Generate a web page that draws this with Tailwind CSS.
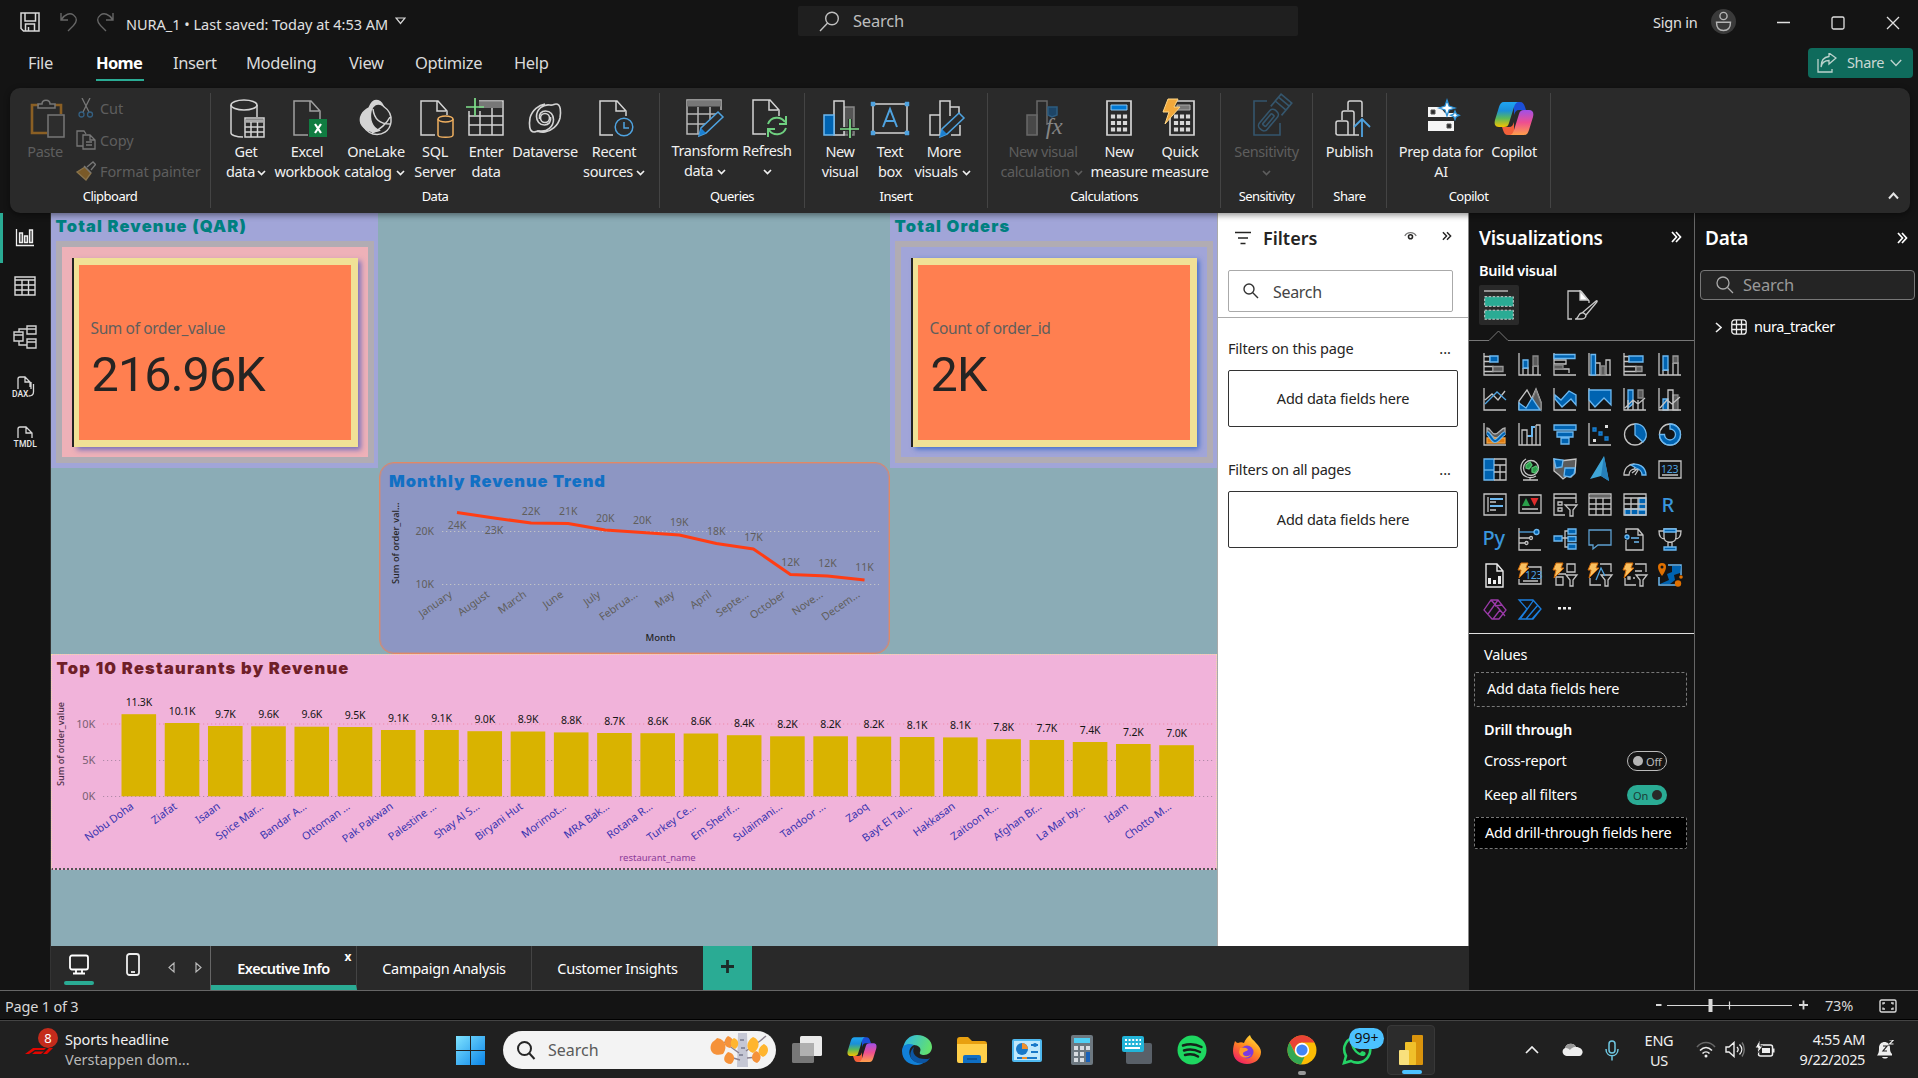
<!DOCTYPE html>
<html lang="en">
<head>
<meta charset="utf-8">
<title>NURA_1</title>
<script src="https://cdn.jsdelivr.net/npm/@tailwindcss/browser@4"></script>
</head>
<body class="w-[1918px] h-[1078px] overflow-hidden bg-[#141414] text-white font-['Noto_Sans',sans-serif] text-[14.5px] tracking-[-0.014em] whitespace-nowrap flex flex-col">

<!-- title bar -->
<header class="h-[43px] shrink-0 flex items-start text-[#e0e0e0]">
  <svg class="ml-5 mt-3 w-5 h-5 shrink-0" viewBox="0 0 20 20" fill="none" stroke="#d8d8d8" stroke-width="1.5"><path d="M1 1h18v18H3.500l-2.500-2.500zM5 1v8h10.500V1M5.500 19v-7h9v7M8.500 19v-4"/></svg>
  <svg class="ml-5 mt-3 w-[18px] h-5 shrink-0" viewBox="0 0 18 20" fill="none" stroke="#666" stroke-width="1.400"><path d="M1 1v7h7M1.500 7.500C5 2 10 .5 13.500 3c4 3 3.500 7 0 10.500L8 19"/></svg>
  <svg class="ml-[18px] mt-3 w-[18px] h-5 shrink-0" viewBox="0 0 18 20" fill="none" stroke="#666" stroke-width="1.400"><path d="M17 1v7h-7M16.500 7.500C13 2 8 .5 4.500 3c-4 3-3.500 7 0 10.500L10 19"/></svg>
  <div class="ml-3 mt-[14px] w-[262px] leading-5 tracking-[-0.001em]">NURA_1 • Last saved: Today at 4:53 AM</div>
  <svg class="ml-[7px] mt-[17px] w-[11px] h-2 shrink-0" viewBox="0 0 11 8" fill="none" stroke="#d8d8d8" stroke-width="1.200"><path d="M1 1h9L5.500 6.500z"/></svg>
  <div class="ml-[392px] mt-1.5 w-[500px] h-[30px] bg-[#1f1f1f] rounded-xs flex items-center pl-[21px] text-[16.5px] text-[#bdbdbd]">
    <svg class="w-[21px] h-[21px]" viewBox="0 0 21 21" fill="none" stroke="#c0c0c0" stroke-width="1.400"><circle cx="13" cy="7.500" r="6.300"/><path d="M8.600 12L1 20"/></svg>
    <span class="ml-[13px]">Search</span>
  </div>
  <div class="ml-[355px] mt-3 w-[48px] leading-5">Sign in</div>
  <svg class="ml-[10px] mt-[9px] w-[25px] h-[25px] shrink-0" viewBox="0 0 25 25" fill="none" stroke="#b5b5b5" stroke-width="1.400"><circle cx="12.500" cy="12.500" r="12.500" fill="#3a3a3a" stroke="none"/><circle cx="12.500" cy="7" r="3.600"/><path d="M5.500 13.200h14c0 5-2.500 8.300-7 8.300s-7-3.300-7-8.300z"/></svg>
  <svg class="ml-10 mt-3 w-[126px] h-5 shrink-0" viewBox="0 0 126 20" fill="none" stroke="#e0e0e0" stroke-width="1.300"><path d="M1 10.500h13M111 5l12 12M123 5l-12 12"/><rect x="56" y="5" width="12" height="12" rx="1.500"/></svg>
</header>

<!-- menu tabs -->
<nav class="h-[45px] shrink-0 flex items-start text-[16.500px] text-[#dadada] tracking-[-0.022em]">
  <div class="ml-7 mt-2 w-[68px] leading-6">File</div>
  <div class="mt-2 w-[48px] h-[30px] leading-6 font-bold text-white border-b-2 border-[#2aab94] tracking-[-0.04em]">Home</div>
  <div class="ml-[29px] mt-2 w-[73px] leading-6">Insert</div>
  <div class="mt-2 w-[103px] leading-6">Modeling</div>
  <div class="mt-2 w-[66px] leading-6">View</div>
  <div class="mt-2 w-[99px] leading-6">Optimize</div>
  <div class="mt-2 leading-6">Help</div>
  <div class="ml-auto mr-[5px] mt-[5px] w-[105px] h-[30px] rounded bg-[#0f6b5c] flex items-center pl-[9px] text-[14.5px] text-[#c8d8d4]">
    <svg class="w-5 h-5" viewBox="0 0 20 20" fill="none" stroke="#bcd3cd" stroke-width="1.300"><path d="M1 6v13h14v-3"/><path d="M4 14c1-4.500 4-6.500 8-6.500V11l7-6-7-5v3.500C7 4 4 8 4 14z"/></svg>
    <span class="ml-[10px]">Share</span>
    <svg class="ml-[6px] w-3 h-2" viewBox="0 0 12 8" fill="none" stroke="#bcd3cd" stroke-width="1.400"><path d="M.8 1L6 6.500 11.200 1"/></svg>
  </div>
</nav>

<svg class="hidden"><symbol id="chev" viewBox="0 0 9 6"><path d="M1 1l3.500 3.500L8 1" fill="none" stroke="currentColor" stroke-width="1.700"/></symbol></svg>

<!-- ribbon -->
<section class="relative z-10 mx-[10px] w-[1900px] h-[125px] shrink-0 rounded-[10px] bg-[#2a2a2a] shadow-[0_2px_6px_rgba(0,0,0,0.45)] flex py-[5px] text-[#f0f0f0] leading-5 tracking-[-0.026em]">
  <div class="w-[201px] border-r border-[#444] flex flex-col text-[#5e5e5e]">
    <div class="h-[93px] flex pl-[18px]">
      <div class="w-[34px] flex flex-col items-center">
        <svg class="ml-[5px] mt-[6px] w-9 h-[39px] shrink-0" viewBox="0 0 36 39" fill="none"><path d="M9 6H2v28h15M25 6h6v9" stroke="#8a5f24" stroke-width="2.600"/><path d="M8 9V5h4c0-5 8-5 8 0h5v4z" stroke="#777" stroke-width="1.500"/><rect x="18" y="16" width="16" height="22" stroke="#777" stroke-width="1.500" fill="#2d2d2d"/></svg>
        <span class="mt-[3px]">Paste</span>
      </div>
      <div class="ml-[14px] flex flex-col tracking-[-0.008em]">
        <div class="h-[30px] flex items-center"><svg class="w-5 h-5" viewBox="0 0 20 20" fill="none" stroke="#777" stroke-width="1.300"><path d="M6 0l7 14M14 0L7 14"/><g stroke="#345f80"><circle cx="5.500" cy="16.500" r="2.500"/><circle cx="14" cy="16.500" r="2.500"/></g></svg><span class="ml-[4px]">Cut</span></div>
        <div class="h-[35px] flex items-center"><svg class="w-5 h-5" viewBox="0 0 20 20" fill="none" stroke="#777" stroke-width="1.300"><path d="M7 16H1V1h7l2 3M7 5h7l5 5v9H7zM14 5v5h5M10 12h6M10 15h6"/></svg><span class="ml-[4px]">Copy</span></div>
        <div class="h-[30px] flex items-center"><svg class="w-5 h-5" viewBox="0 0 20 20" fill="none" stroke="#777" stroke-width="1.300"><path d="M1 11l8-5 6 6-5 7z" fill="#7a5a28" stroke="#8a744c"/><path d="M8 5l7 7M11 6l6-5 2.500 2.500L15 9"/></svg><span class="ml-[4px]">Format painter</span></div>
      </div>
    </div>
    <div class="text-center text-white text-[13px] tracking-[-0.04em]">Clipboard</div>
  </div>

  <div class="w-[449px] border-r border-[#444] flex flex-col">
    <div class="h-[93px] flex pl-[7px] [&>div]:flex [&>div]:flex-col [&>div]:items-center [&>div]:pt-[4px]">
      <div class="w-[56px]"><svg class="w-10 h-11 shrink-0 ml-1" viewBox="0 0 40 44" fill="none" stroke="#d4d4d4" stroke-width="1.500"><ellipse cx="16" cy="8" rx="13" ry="5"/><path d="M3 8v28c0 2 5 4 12 4M29 8v12"/><rect x="17" y="21" width="19" height="19"/><path d="M17 24h19" stroke-width="3.500" stroke="#aaa"/><path d="M17 30h19M17 35h19M23 25v15M29.500 25v15"/></svg><span>Get</span><span>data<svg class="inline ml-[2px] w-[9px] h-[6px]"><use href="#chev"/></svg></span></div>
      <div class="w-[66px]"><svg class="w-10 h-11 shrink-0" viewBox="0 0 40 44" fill="none" stroke="#a0a0a0" stroke-width="1.500"><path d="M21 38H7V4h17l9 10v8M23 4v10h9"/><rect x="22" y="22" width="18" height="18" fill="#107c41" stroke="none"/><path d="M28 27l6 9M34 27l-6 9" stroke="#fff" stroke-width="2.200"/></svg><span>Excel</span><span>workbook</span></div>
      <div class="w-[72px]"><svg class="w-10 h-11 shrink-0" viewBox="0 0 40 44" fill="none" stroke="#d4d4d4" stroke-width="1.500"><path d="M13 11C15 6 17 3.500 20 3.500s5.500 2 7 5c-6-3-10-1-12 5-2 9 1 17 8 20-7 3-15-1-18-7-2-6 1-12 8-15.500z" fill="#d4d4d4"/><path d="M27 9c6 4 9 10 8 16-1 9-9 14-18 12-6-2-10-7-11-13M17 12c1 9 6 15 17 15M16 36c8-3 15-10 18-16"/></svg><span>OneLake</span><span class="-ml-[3px]">catalog<svg class="inline ml-[4px] w-[9px] h-[6px]"><use href="#chev"/></svg></span></div>
      <div class="w-[46px]"><svg class="w-10 h-11 shrink-0 ml-1" viewBox="0 0 40 44" fill="none" stroke="#d4d4d4" stroke-width="1.500"><path d="M18 38H4V4h17l9 10v4M20 4v10h9"/><g stroke="#f0b060" fill="#2a2a2a"><path d="M21 22v16c0 3 15 3 15 0V22"/><ellipse cx="28.500" cy="22" rx="7.500" ry="3"/></g></svg><span>SQL</span><span>Server</span></div>
      <div class="w-[56px]"><svg class="w-10 h-11 shrink-0 overflow-visible" viewBox="0 0 40 44" fill="none" stroke="#d4d4d4" stroke-width="1.500"><path d="M3 14v24h34V4H13M3 19h34M3 28h34M14 14v24M26 10v28"/><path d="M13 6.500h23M13 9h23" stroke="#777" stroke-width="4"/><path d="M0 10h18M9 1v18" stroke="#7fe08a" stroke-width="1.700"/></svg><span>Enter</span><span>data</span></div>
      <div class="w-[62px]"><svg class="w-10 h-11 shrink-0" viewBox="0 0 40 44" fill="none" stroke="#d4d4d4" stroke-width="1.600"><circle cx="20" cy="21" r="4.500"/><path d="M25.500 20c1 5-2 8-6 8-5 0-8-4-8-8.500C11.500 12 18 7 25 8c3 .5 4-1 6-1 5 0 5 8 4 14-2 8-9 13-15 14-3 .5-5 0-8-1M14.500 22c-1-5 2-8 6-8 5 0 8 4 8 8.500C28.500 30 22 35 15 34c-3-.5-4 1-6 1-5 0-5-8-4-14C7 13 14 8 20 7"/></svg><span>Dataverse</span></div>
      <div class="w-[76px]"><svg class="w-10 h-11 shrink-0 ml-1" viewBox="0 0 40 44" fill="none" stroke="#d4d4d4" stroke-width="1.500"><path d="M17 38H4V4h17l9 10v5M20 4v10h9"/><g stroke="#4fa3e0"><circle cx="28" cy="30" r="8.800"/><path d="M28 25v6h5"/></g></svg><span>Recent</span><span>sources<svg class="inline ml-[3px] w-[9px] h-[6px]"><use href="#chev"/></svg></span></div>
    </div>
    <div class="text-center text-white text-[13px] tracking-[-0.04em]">Data</div>
  </div>

  <div class="w-[145px] border-r border-[#444] flex flex-col">
    <div class="h-[93px] flex pl-[12px] [&>div]:flex [&>div]:flex-col [&>div]:items-center [&>div]:pt-[3px]">
      <div class="w-[66px]"><svg class="w-10 h-11 shrink-0" viewBox="0 0 40 44" fill="none" stroke="#b8b8b8" stroke-width="1.500"><path d="M36 14V4H2v34h12M2 18h32M2 28h20M13 11v27M25 11v13"/><path d="M2 7.500h34" stroke="#777" stroke-width="6"/><path d="M14 40l2-8 17-16 5 5-17 16z" stroke="#4fa3e0" fill="#2a2a2a"/><path d="M14 40l2-8 5 5z" fill="#1b7fd0" stroke="none"/></svg><span>Transform</span><span>data<svg class="inline ml-[4px] w-[9px] h-[6px]"><use href="#chev"/></svg></span></div>
      <div class="w-[58px]"><svg class="w-10 h-11 shrink-0 ml-1" viewBox="0 0 40 44" fill="none" stroke="#d4d4d4" stroke-width="1.500"><path d="M17 38H4V4h17l9 10v6M20 4v10h9"/><g stroke="#6fd080" stroke-width="2"><path d="M19 28c3-8 13-8 17-2M37 20v8h-7M37 32c-3 8-13 8-17 2M19 41v-8h7"/></g></svg><span>Refresh</span><span><svg class="inline w-[9px] h-[6px]"><use href="#chev"/></svg></span></div>
    </div>
    <div class="text-center text-white text-[13px] tracking-[-0.04em]">Queries</div>
  </div>

  <div class="w-[183px] border-r border-[#444] flex flex-col">
    <div class="h-[93px] flex pl-[10px] [&>div]:flex [&>div]:flex-col [&>div]:items-center [&>div]:pt-[4px]">
      <div class="w-[50px]"><svg class="w-10 h-11 shrink-0" viewBox="0 0 40 44" fill="none" stroke="#d4d4d4" stroke-width="1.500"><rect x="24" y="10" width="10" height="28" fill="#555" stroke="#888"/><rect x="14" y="4" width="10" height="34" fill="#2a2a2a"/><rect x="4" y="18" width="10" height="20" fill="#0063b1" stroke="#6cb8f0"/><path d="M20 32h19M30 22v19" stroke="#2a2a2a" stroke-width="4"/><path d="M20 32h19M30 22v19" stroke="#7fe08a" stroke-width="1.700"/></svg><span>New</span><span>visual</span></div>
      <div class="w-[50px]"><svg class="w-10 h-11 shrink-0" viewBox="0 0 40 44" fill="none" stroke="#d4d4d4" stroke-width="1.500"><path d="M3 7h34v29H3z"/><path d="M13 30l7-18 7 18M15.500 24h9" stroke="#4fa3e0" stroke-width="2"/><path d="M1 5h4v4H1zM35 5h4v4h-4zM1 34h4v4H1zM35 34h4v4h-4z" fill="#4fa3e0" stroke="#4fa3e0" stroke-width=".5"/></svg><span>Text</span><span>box</span></div>
      <div class="w-[58px]"><svg class="ml-1 w-10 h-11 shrink-0" viewBox="0 0 40 44" fill="none" stroke="#d4d4d4" stroke-width="1.500"><path d="M4 38V18h10v20zM14 18V4h10v15M24 10h9v6M25 38h9V28M14 38V28"/><path d="M14 40l2-8 17-16 5 5-17 16z" stroke="#4fa3e0" fill="#2a2a2a"/><path d="M14 40l2-8 5 5z" fill="#1b7fd0" stroke="none"/></svg><span>More</span><span class="-ml-[3px]">visuals<svg class="inline ml-[4px] w-[9px] h-[6px]"><use href="#chev"/></svg></span></div>
    </div>
    <div class="text-center text-white text-[13px] tracking-[-0.04em]">Insert</div>
  </div>

  <div class="w-[233px] border-r border-[#444] flex flex-col">
    <div class="h-[93px] flex pl-[9px] [&>div]:flex [&>div]:flex-col [&>div]:items-center [&>div]:pt-[4px]">
      <div class="w-[92px] text-[#5e5e5e]"><svg class="w-10 h-11 shrink-0" viewBox="0 0 40 44" fill="none" stroke="#686868" stroke-width="1.500"><path d="M4 38V18h10v20z" fill="#484848"/><path d="M14 38V4h10v24"/><path d="M25 10h9v8l-5 2-4-2z" fill="#1d4567" stroke="#2d5c80"/></svg><span class="absolute mt-[17px] ml-[22px] text-[24px] leading-6 italic font-['Liberation_Serif',serif] text-[#858585]">fx</span><span>New visual</span><span class="-ml-[3px]">calculation<svg class="inline ml-[4px] w-[9px] h-[6px]"><use href="#chev"/></svg></span></div>
      <div class="w-[60px]"><svg class="w-10 h-11 shrink-0" viewBox="0 0 40 44"><path d="M8 4h24v34H8z" fill="#2a2a2a" stroke="#d4d4d4" stroke-width="1.700"/><path d="M12 8h16v5H12z" fill="#0078d4" stroke="#8cc8f4"/><path d="M14 17.500v17M20 17.500v17M26 17.500v17" stroke="#d8d8d8" stroke-width="4.200" stroke-dasharray="4 2.500"/></svg><span>New</span><span>measure</span></div>
      <div class="w-[62px]"><svg class="w-10 h-11 shrink-0" viewBox="0 0 40 44"><path d="M10 4h24v34H10z" fill="#2a2a2a" stroke="#d4d4d4" stroke-width="1.700"/><path d="M17 8h13v5H17z" fill="#777" stroke="#aaa"/><path d="M16 17.500v17M22 17.500v17M28 17.500v17" stroke="#d8d8d8" stroke-width="4.200" stroke-dasharray="4 2.500"/><path d="M8 2h10l-4 8h6L5 27l4-12H3z" fill="#f2a93b" stroke="#ffd685"/></svg><span>Quick</span><span>measure</span></div>
    </div>
    <div class="text-center text-white text-[13px] tracking-[-0.04em]">Calculations</div>
  </div>

  <div class="w-[92px] border-r border-[#444] flex flex-col">
    <div class="h-[93px] flex flex-col items-center pt-[4px] text-[#5e5e5e]">
      <svg class="ml-1 w-10 h-11 shrink-0 overflow-visible" viewBox="0 0 40 44" fill="none" stroke="#35566d" stroke-width="1.600"><path d="M18 4H5v34h26V26"/><g transform="rotate(40 22 20)"><rect x="17" y="12" width="10" height="24" rx="4"/><rect x="20" y="17" width="4" height="14" rx="1"/><path d="M15 12V5h14v7M15 0h14M15-4h14v9H15z"/></g></svg>
      <span>Sensitivity</span><span><svg class="inline w-[9px] h-[6px]"><use href="#chev"/></svg></span>
    </div>
    <div class="text-center text-white text-[13px] tracking-[-0.04em]">Sensitivity</div>
  </div>

  <div class="w-[74px] border-r border-[#444] flex flex-col">
    <div class="h-[93px] flex flex-col items-center pt-[4px]">
      <svg class="ml-1 w-10 h-11 shrink-0" viewBox="0 0 40 44" fill="none" stroke="#d4d4d4" stroke-width="1.500"><path d="M4 37V26q0-2 2-2h8q2 0 2 2v12H6q-2 0-2-2M10 23v-7q0-2 2-2h8q2 0 2 2v22h-8M16 13V6q0-2 2-2h10q2 0 2 2v14M22 38h5"/><path d="M30 40V22M22 30l8-8 8 8" stroke="#4fa3e0" stroke-width="1.800"/></svg>
      <span>Publish</span>
    </div>
    <div class="text-center text-white text-[13px] tracking-[-0.04em]">Share</div>
  </div>

  <div class="w-[164px] border-r border-[#444] flex flex-col">
    <div class="h-[93px] flex pl-[14px] [&>div]:flex [&>div]:flex-col [&>div]:items-center [&>div]:pt-[4px]">
      <div class="w-[80px]"><svg class="w-10 h-11 shrink-0" viewBox="0 0 40 44"><path d="M7 10h12l5 6h9v4H7zM7 24h26v10H7z" fill="#f5f5f5"/><path d="M10 13h4v4h-4zM26 27h4v4h-4z" fill="#2a2a2a" stroke="#555"/><path d="M26 3l2 6 6 2-6 2-2 6-2-6-6-2 6-2zM34 14l1.300 3 3 1.300-3 1.300-1.300 3-1.300-3-3-1.300 3-1.300z" fill="#fff" stroke="#2a8fd4" stroke-width="1.300"/></svg><span>Prep data for</span><span>AI</span></div>
      <div class="w-[66px]"><svg class="w-10 h-11 shrink-0" viewBox="0 0 40 44"><defs>
        <linearGradient id="cpA" x1="0" y1="0" x2="0" y2="1"><stop offset="0" stop-color="#1fa5f2"/><stop offset=".35" stop-color="#1b8fd8"/><stop offset=".65" stop-color="#5ab85a"/><stop offset="1" stop-color="#f5c400"/></linearGradient>
        <linearGradient id="cpB" x1="0" y1="0" x2="0" y2="1"><stop offset="0" stop-color="#a050e8"/><stop offset=".5" stop-color="#ee4f90"/><stop offset="1" stop-color="#ffa04a"/></linearGradient></defs>
        <g id="copilot"><path d="M20 5h6c3 0 4 2 5 5l1 3h-7c-3 0-4 2-5 5z" fill="#1c4fd8"/><path d="M20 38h-6c-3 0-4-2-5-5l-1-3h7c3 0 4-2 5-5z" fill="#f2603a"/>
        <path d="M10 5h15c-3 0-4 2-5 5l-5 16c-1 3-2 4-5 4H5c-4 0-5-3-4-7L5 10c1-3 2-5 5-5z" fill="url(#cpA)"/><path d="M30 38H15c3 0 4-2 5-5l5-16c1-3 2-4 5-4h5c4 0 5 3 4 7l-4 13c-1 3-2 5-5 5z" fill="url(#cpB)"/></g></svg><span>Copilot</span></div>
    </div>
    <div class="text-center text-white text-[13px] tracking-[-0.04em]">Copilot</div>
  </div>
  <svg class="ml-auto mr-[11px] mt-[99px] w-[11px] h-2" viewBox="0 0 11 8" fill="none" stroke="#e4e4e4" stroke-width="2"><path d="M1 6.500l4.500-5 4.500 5"/></svg>
</section>

<!-- workspace -->
<main class="h-[777px] shrink-0 flex">
  <aside class="w-[51px] shrink-0 border-r border-[#333] flex flex-col items-center relative pt-[12px] gap-[26px]">
    <div class="absolute left-0 top-0 w-[3px] h-[50px] bg-[#2aab94]"></div>
    <svg class="w-6 h-6" viewBox="0 0 24 24" fill="none" stroke="#f0f0f0" stroke-width="1.300"><path d="M3.500 4v16.500H21"/><path d="M6.500 8h3v9.500h-3zM11.500 11h3v6.500h-3zM16.500 5h3v12.500h-3z" fill="#666"/></svg>
    <svg class="w-6 h-6" viewBox="0 0 24 24" fill="none" stroke="#d8d8d8" stroke-width="1.400"><path d="M2 2h20v18H2zM2 5h20M2 10h20M2 15h20M9 5v15M15.500 5v15"/></svg>
    <svg class="w-6 h-6" viewBox="0 0 24 24" fill="none" stroke="#d0d0d0" stroke-width="1.400"><path d="M1 7h9v9H1zM14 1h9v8h-9zM14 14h9v9h-9zM1 10h9M14 4h9M14 17h9M6 7V4h8M6 16v4h8"/></svg>
    <svg class="w-[26px] h-6 overflow-visible" viewBox="0 0 26 24" fill="none" stroke="#d8d8d8" stroke-width="1.300"><path d="M6 14V4q0-2 2-2h5l5 5v5M13 2v5h5M19 14V7M21.500 9v8q0 4-5 4"/><text x="0" y="21.500" font-size="8.500" fill="#e8e8e8" stroke="none" letter-spacing="0" font-family="Roboto" font-weight="500">DAX</text></svg>
    <svg class="w-[26px] h-6 overflow-visible" viewBox="0 0 26 24" fill="none" stroke="#d8d8d8" stroke-width="1.300"><path d="M6 13V4q0-2 2-2h6l6 6v5M14 2v6h6"/><text x="1.500" y="21.500" font-size="8.500" fill="#e8e8e8" stroke="none" letter-spacing=".2" font-family="Roboto" font-weight="500">TMDL</text></svg>
  </aside>

  <div class="w-[1418px] shrink-0 flex flex-col">
    <div class="h-[733px] flex">
      <!-- report canvas: freely placed visuals -->
      <div class="relative w-[1166px] shrink-0 bg-[#8bacb6] overflow-hidden">
        <section class="absolute left-0 top-0 w-[327px] h-[255px] bg-[#a1a5d8] flex flex-col px-[4.500px]">
          <h2 class="h-[28px] leading-[27px] text-[16.500px] text-[#008080] font-['Inter',sans-serif] font-black tracking-[0.07em]">Total Revenue (QAR)</h2>
          <div class="h-[222px] border-[6px] border-[#b1acb3] bg-[#eeb1b8] pt-[11px] pl-[12px]">
            <div class="w-[284px] h-[189px] bg-[#ff7f50] border-[7px] border-l-[5px] border-[#f0e196] shadow-[-2px_0_0_#222,3px_3px_5px_rgba(60,80,190,0.65)] pt-[51px] pl-[12px]">
              <div class="leading-6 text-[15.500px] text-[#605e5c] tracking-[-0.024em]">Sum of order_value</div>
              <div class="mt-[7px] pl-[1px] leading-[56px] text-[48.500px] text-[#252423] font-['Roboto',sans-serif] tracking-[-0.018em]">216.96K</div>
            </div>
          </div>
        </section>
        <section class="absolute left-[839px] top-0 w-[327px] h-[255px] bg-[#a1a5d8] flex flex-col px-[4.500px]">
          <h2 class="h-[28px] leading-[27px] text-[16.500px] text-[#008080] font-['Inter',sans-serif] font-black tracking-[0.07em]">Total Orders</h2>
          <div class="h-[222px] border-[6px] border-[#b1acb3] bg-[#a1a5d8] pt-[11px] pl-[12px]">
            <div class="w-[284px] h-[189px] bg-[#ff7f50] border-[7px] border-l-[5px] border-[#f0e196] shadow-[-2px_0_0_#222,2px_2px_5px_rgba(30,90,200,0.75)] pt-[51px] pl-[12px]">
              <div class="leading-6 text-[15.500px] text-[#605e5c] tracking-[-0.024em]">Count of order_id</div>
              <div class="mt-[7px] pl-[1px] leading-[56px] text-[48.500px] text-[#252423] font-['Roboto',sans-serif] tracking-[-0.018em]">2K</div>
            </div>
          </div>
        </section>

        <section class="absolute left-[328px] top-[249px] w-[511px] h-[192px] rounded-[15px] bg-[#8d96c3] border border-[#e08866] outline outline-[#e08866]/40 -outline-offset-2">
          <svg id="trend" class="w-full h-full overflow-visible" viewBox="380 463 509 190" letter-spacing="0">
            <text x="389" y="487" font-family="Inter" font-weight="900" font-size="16.500" letter-spacing=".95" fill="#1270c4">Monthly Revenue Trend</text>
            <path d="M442 531.500h437M442 584.500h437" stroke="#c8c8c8" stroke-opacity=".9" stroke-dasharray="1.300 2.700" fill="none"/>
            <g font-size="10.500" fill="#605e5c" text-anchor="end"><text x="434" y="535">20K</text><text x="434" y="588">10K</text></g>
            <text transform="translate(398.500 584) rotate(-90)" font-size="9.200" font-weight="500" fill="#252423">Sum of order_val...</text>
            <text x="660.500" y="641" text-anchor="middle" font-size="9.500" font-weight="500" fill="#252423">Month</text>
          </svg>
        </section>

        <section class="absolute left-0 top-[441px] w-[1166px] h-[216px] bg-[#f1b3da] border border-[#f0dca8] border-b-2 border-b-[#555] border-dotted">
          <svg id="bars" class="w-full h-full overflow-visible" viewBox="52 655 1164 213" letter-spacing="0">
            <text x="56.500" y="673.500" font-family="Inter" font-weight="900" font-size="16.500" letter-spacing="1.220" fill="#6f1f28">Top 10 Restaurants by Revenue</text>
            <path d="M103 724h1110" stroke="#ee7f9c" stroke-opacity=".8" stroke-dasharray="1.200 2.800" fill="none"/>
            <path d="M103 760.500h1110M103 796.500h1110" stroke="#b08aa8" stroke-dasharray="1.200 2.800" fill="none"/>
            <g font-size="11" fill="#7a6072" text-anchor="end" letter-spacing="-.2"><text x="95" y="728">10K</text><text x="95" y="764">5K</text><text x="95" y="800">0K</text></g>
            <text transform="translate(64 786) rotate(-90)" font-size="9.100" font-weight="500" fill="#4a2c44">Sum of order_value</text>
            <text x="657.500" y="860.500" text-anchor="middle" font-size="9.500" fill="#8a3a98">restaurant_name</text>
          </svg>
        </section>
      </div>

      <!-- filters pane -->
      <aside class="flex-1 bg-white text-[#252423] border-l border-[#aaa] border-r border-r-[#888] flex flex-col">
        <div class="h-[57px] flex items-center pl-[17px] pb-[7px]">
          <svg class="w-4 h-[14px]" viewBox="0 0 16 14" fill="none" stroke="#252423" stroke-width="1.500"><path d="M0 1.500h16M3 7h10M5.500 12.500h5"/></svg>
          <h3 class="ml-3 text-[18px] font-semibold w-[141px] tracking-[0]">Filters</h3>
          <svg class="mb-1 w-[13px] h-[10px]" viewBox="0 0 13 10" fill="none" stroke="#252423" stroke-width="1.200"><path d="M.8 5C3 .5 10 .5 12.200 5" stroke="#777"/><circle cx="6.500" cy="5.800" r="2" stroke-width="1.600"/></svg>
          <svg class="mb-1 ml-[25px] w-[10px] h-[10px]" viewBox="0 0 11 10" fill="none" stroke="#252423" stroke-width="1.600"><path d="M1 .8L5 5 1 9.200M5.500.8L9.500 5l-4 4.200"/></svg>
        </div>
        <div class="ml-[10px] w-[225px] h-[42px] border border-[#aaa] rounded-xs flex items-center pl-[14px] text-[16px] text-[#444]">
          <svg class="w-4 h-4" viewBox="0 0 16 16" fill="none" stroke="#333" stroke-width="1.400"><circle cx="6" cy="6" r="5"/><path d="M9.800 9.800L15 15"/></svg>
          <span class="ml-[14px] tracking-[-0.02em] pt-px">Search</span>
        </div>
        <div class="h-[6px] border-b border-[#aaa]"></div>
        <div class="mt-[20px] h-[22px] px-[10px] flex justify-between items-center pr-[17px]"><span>Filters on this page</span><span class="tracking-normal">...</span></div>
        <div class="mt-[10px] ml-[10px] w-[230px] h-[57px] border border-[#333] rounded-xs flex items-center justify-center">Add data fields here</div>
        <div class="mt-[32px] h-[22px] px-[10px] flex justify-between items-center pr-[17px]"><span>Filters on all pages</span><span class="tracking-normal">...</span></div>
        <div class="mt-[10px] ml-[10px] w-[230px] h-[57px] border border-[#333] rounded-xs flex items-center justify-center pt-px">Add data fields here</div>
      </aside>
    </div>

    <!-- page tabs -->
    <div class="h-[44px] bg-[#292929] flex">
      <div class="w-[160px] border-r border-[#666] flex items-start pl-[13px]">
        <div class="w-[30px] flex flex-col items-center"><svg class="mt-[8px] w-5 h-[21px]" viewBox="0 0 20 21" fill="none" stroke="#fff" stroke-width="1.800"><rect x="1" y="1.500" width="18" height="14" rx="2"/><path d="M7 15.500v3.500M13 15.500v3.500M4 19.500h12"/></svg><div class="mt-[6px] w-[30px] h-1 rounded-full bg-[#2aab94]"></div></div>
        <svg class="ml-[32px] mt-[7px] w-[14px] h-6" viewBox="0 0 14 24" fill="none" stroke="#eee" stroke-width="1.800"><rect x="1" y="1" width="12" height="21" rx="2.500"/><path d="M5 19h4"/></svg>
        <svg class="ml-[28px] mt-[16px] w-[34px] h-3" viewBox="0 0 34 12" fill="none" stroke="#b8b8b8" stroke-width="1.200"><path d="M6 1v9L1 5.500zM28 1v9L33 5.500z"/></svg>
      </div>
      <div class="relative w-[146px] border-b-[5px] border-b-[#2aab94] border-r border-r-[#444] flex items-center justify-center pt-[6px] font-semibold tracking-[-0.038em]">Executive Info<span class="absolute right-[5px] top-[3px] text-[12px] leading-4 font-bold">x</span></div>
      <div class="w-[175px] border-r border-[#444] flex items-center justify-center pt-[1px] tracking-[-0.02em]">Campaign Analysis</div>
      <div class="w-[171px] flex items-center justify-center pt-[1px] tracking-[-0.02em]">Customer Insights</div>
      <div class="w-[49px] bg-[#2aab94] flex items-center justify-center pb-1"><svg class="w-[13px] h-[13px]" viewBox="0 0 14 14" stroke="#1c2b28" stroke-width="3"><path d="M7 0v14M0 7h14"/></svg></div>
    </div>
  </div>

  <!-- visualizations pane -->
  <aside class="w-[226px] shrink-0 border-r border-[#666] flex flex-col">
    <div class="h-[50px] flex items-center pl-[10px] pt-px"><h3 class="w-[192px] text-[19px] font-semibold tracking-[-0.014em]">Visualizations</h3><svg class="mb-[3px] w-[11px] h-3" viewBox="0 0 11 12" fill="none" stroke="#fff" stroke-width="1.700"><path d="M1 1l4.500 5L1 11M5 1l4.500 5L5 11"/></svg></div>
    <div class="h-[21px] -mt-[4px] pl-[10px] leading-[22px] text-[14.5px] font-semibold tracking-[-0.018em]">Build visual</div>
    <div class="mt-[5px] h-[40px] pl-[10px] flex">
      <div class="w-10 h-10 rounded-xs bg-[#292929] flex items-center justify-center"><svg class="w-[30px] h-[30px]" viewBox="0 0 30 30"><path d="M0 1h24" stroke="#ccc" stroke-width="1.300"/><path d="M.7 6.700h28.600v9.600H.7zM.7 20.200h28.600v9H.7z" fill="#2aab94" stroke="#d0d0d0" stroke-dasharray="2.500 1.500"/></svg></div>
      <svg class="ml-[48px] mt-[5px] w-[31px] h-[31px]" viewBox="0 0 31 31" fill="none" stroke="#c8c8c8" stroke-width="1.300"><path d="M5 29H1V1h13M14 1l8 10v2"/><path d="M13 1l8 9h-8z" fill="#fff"/><path d="M8 29c2 0 3-2 4-4s4-3 6-1 0 5-3 5zM15 23L29 11c2-1 1 1 0 2L19 25"/></svg>
    </div>
    <svg class="w-[225px] h-[17px] shrink-0" viewBox="0 0 225 17" fill="none" stroke="#777" stroke-width="1"><path d="M0 15.500h20l9.500-9.500 9.500 9.500h186"/></svg>
    <div class="h-[292px] pt-[11px] pl-[14px] grid grid-cols-[repeat(6,35px)] auto-rows-[35px] content-start border-b border-[#e0e0e0] [&>svg]:w-[24px] [&>svg]:h-[24px] [&>svg]:overflow-visible [&>svg]:fill-none [&>svg]:stroke-[#c4c4c4] [&>svg]:[stroke-width:1.3]">
      <svg viewBox="0 0 24 24"><path d="M1 0v22h22M1 3.500h6v5H1M1 13.500h9v5H1"/><path d="M7 3h8v6H7z" fill="#0063b1" stroke="#6cb8f0"/><path d="M10 13.500h10v5H10z" fill="#5b5b5b" stroke="#999"/></svg>
      <svg viewBox="0 0 24 24"><path d="M1 0v22h22M5 15h5v7M5 15v7M15 13h5v9M15 13v9"/><path d="M5 7h5v8H5z" fill="#0063b1" stroke="#6cb8f0"/><path d="M15 3h5v10h-5z" fill="#5b5b5b" stroke="#888"/></svg>
      <svg viewBox="0 0 24 24"><path d="M1 0v22h22M1 7h12v4H1M1 16h15v4"/><path d="M1 12h9v4H1z" fill="#5b5b5b" stroke="#888"/><path d="M1 1.500h21v4H1z" fill="#0063b1" stroke="#6cb8f0"/></svg>
      <svg viewBox="0 0 24 24"><path d="M1 0v22h22M8 10h4v12M18 22V7h4v15"/><path d="M13 13h4v9h-4z" fill="#5b5b5b" stroke="#888"/><path d="M3 1.500h4.500V22H3z" fill="#0063b1" stroke="#6cb8f0"/></svg>
      <svg viewBox="0 0 24 24"><path d="M1 0v22h22M1 3.500h5v5H1M1 13.500h12v5H1"/><path d="M6 3h14v6H6z" fill="#0063b1" stroke="#6cb8f0"/><path d="M13 13.500h6v5h-6z" fill="#5b5b5b" stroke="#999"/></svg>
      <svg viewBox="0 0 24 24"><path d="M1 0v22h22M5 17h5v5M5 17v5M15 10h5v12M15 10v12"/><path d="M5 3h5v14H5z" fill="#0063b1" stroke="#6cb8f0"/><path d="M15 3h5v7h-5z" fill="#5b5b5b" stroke="#999"/></svg>

      <svg viewBox="0 0 24 24"><path d="M1 0v22h22M2 12l7-6 6 6 7-9"/><path d="M2 16L14 4l9 8" stroke="#4fa3e0"/></svg>
      <svg viewBox="0 0 24 24"><path d="M1 22V13L9 2l5 9M14 10l4-9 5 13v8"/><path d="M14 12l4-10 5 13v7z" fill="#5b5b5b" stroke="#888"/><path d="M1 22v-7l7 5 6-10 8 12z" fill="#0063b1" stroke="#6cb8f0"/></svg>
      <svg viewBox="0 0 24 24"><path d="M1 0v22h22"/><path d="M2 7l6 5 8-9 7 4v10l-5-6-9 8-7-8z" fill="#0063b1" stroke="#6cb8f0"/></svg>
      <svg viewBox="0 0 24 24"><path d="M1 0v22h22"/><path d="M1 2h22v15l-7-7-9 9-6-7z" fill="#0063b1" stroke="#6cb8f0"/></svg>
      <svg viewBox="0 0 24 24"><path d="M5 2h5v14l-5 4z" fill="#0063b1" stroke="#6cb8f0"/><path d="M15 2h5v8h-5z" fill="#5b5b5b" stroke="#888"/><path d="M1 0v22h22M5 12v10M10 12v10M15 12v10M20 12v10M2 20l8-8 5 4 7-6"/></svg>
      <svg viewBox="0 0 24 24"><path d="M15 7h5v15h-5z" fill="#5b5b5b" stroke="#888"/><path d="M5 11h5v11H5z" fill="#0063b1" stroke="#6cb8f0"/><path d="M1 0v22h22M10 22V2h5v20M2 20l7-8 5 4 8-7"/></svg>

      <svg viewBox="0 0 24 24"><path d="M1 0v22h22"/><path d="M4 5c4 0 4 6 8 6s6-6 10-6v5c-4 0-5 5-9 5s-5-5-9-5z" fill="#5b5b5b" stroke="#b0b0b0"/><path d="M4 15h18v5H4zM4 12h4v3M22 12h-4v3" fill="#e07b10" stroke="#f0a040"/><path d="M4 10c3 1 5 8 8 8s6-6 10-8" stroke="#6cb8f0" stroke-width="4"/><path d="M4 10c3 1 5 8 8 8s6-6 10-8" stroke="#0063b1" stroke-width="2"/></svg>
      <svg viewBox="0 0 24 24"><path d="M1 0v22h22M4 7h5v15H4zM9 7v6h5v9M18 2h4v20M18 2v20"/><path d="M10 13h4V4h3" stroke="#6cb8f0" stroke-width="2"/></svg>
      <svg viewBox="0 0 24 24"><path d="M1 2h22v5H1zM4 9h16v5H4zM8 15h8v6H8z" fill="#0063b1" stroke="#6cb8f0"/></svg>
      <svg viewBox="0 0 24 24"><path d="M1 0v22h22"/><path d="M5 5h3v3H5zM11 9h3v3h-3zM17 14h3v3h-3z" fill="#0063b1" stroke="#1b7fd0"/><path d="M5 16h3v3H5zM17 2h3v3h-3z" fill="#ddd" stroke="none"/></svg>
      <svg viewBox="0 0 24 24"><circle cx="12" cy="11.500" r="10.500"/><path d="M12 1a10.500 10.500 0 0 1 8 18l-8-7z" fill="#0063b1" stroke="#6cb8f0"/></svg>
      <svg viewBox="0 0 24 24"><circle cx="12" cy="11.500" r="10.500"/><path d="M12 1a10.500 10.500 0 1 1-10.500 10.500h5A5.500 5.500 0 1 0 12 6z" fill="#0063b1" stroke="#6cb8f0"/></svg>

      <svg viewBox="0 0 24 24"><path d="M1 1h10v21H1z" fill="#0063b1" stroke="#6cb8f0"/><path d="M1 12h10" stroke="#6cb8f0"/><path d="M11 1h12v21H11M11 7h12M17 14v8M11 14h6M17 7v7h6"/></svg>
      <svg viewBox="0 0 24 24"><circle cx="13" cy="10" r="7.500"/><path d="M8 1C1 5 1 16 9 19c3 1 6 1 9-1M12 19v3M5 22h15"/><path d="M8 7l4-3 2 3-3 4-3-1zM14 10l4-2 2 3-3 4-3-1z" fill="#2a9d4a" stroke="#55c070"/></svg>
      <svg viewBox="0 0 24 24"><path d="M1 1l6 2 8-1 8-1-1 14-4 4-4-1-4 3-4-4-5-4z" fill="#5b5b5b"/><path d="M1 1l9 1-1 7-6 1zM12 10h10l-1 6-4 3-6-1z" fill="#0063b1" stroke="#6cb8f0"/></svg>
      <svg viewBox="0 0 24 24"><path d="M16-2l5 25-8-5-11 3z" fill="#3fa6d8" stroke="none"/><path d="M16-2l5 25-8-5z" fill="#2580ba" stroke="none"/></svg>
      <svg viewBox="0 0 24 24"><path d="M1 17C1 10 6 6 11 6l1 5c-3 0-6 2-6 6zM9 15l8-6-5 8"/><path d="M8 7c7-3 15 2 15 10h-4c0-4-3-6-6-7z" fill="#0063b1" stroke="#6cb8f0"/></svg>
      <svg viewBox="0 0 24 24"><path d="M1 3h22v17H1zM4 17h16"/><text x="3" y="14.500" font-size="10.500" fill="#4fa3e0" stroke="none" letter-spacing="-.2">123</text></svg>

      <svg viewBox="0 0 24 24"><path d="M1 1h22v21H1zM5 4v15M7 9h6M7 17h6"/><path d="M7 6h13M7 13h13" stroke="#6cb8f0" stroke-width="2"/></svg>
      <svg viewBox="0 0 24 24"><path d="M1 2h22v18H1zM4 16h16"/><path d="M8 5l4 8H4z" fill="#2a9d4a" stroke="none"/><path d="M12.500 5h8l-4 8z" fill="#e02c2c" stroke="none"/></svg>
      <svg viewBox="0 0 24 24"><path d="M12 22H1V1h22v9M1 5h22M5 9h4v3H5zM5 15h4v3H5zM12 12h12l-4 5v6h-3v-6z"/></svg>
      <svg viewBox="0 0 24 24"><path d="M1 1h22v21H1zM1 5h22M1 11h22M1 16h22M8 5v17M15 5v17"/><path d="M2 3h20" stroke="#666" stroke-width="2.500"/></svg>
      <svg viewBox="0 0 24 24"><path d="M2 16h21v6H2zM16 5h7v12h-7z" fill="#0063b1" stroke="#6cb8f0"/><path d="M1 1h22v21H1zM1 5h22M1 11h22M1 16h22M8 5v17M15 5v17"/></svg>
      <svg viewBox="0 0 24 24"><text x="3.500" y="18.500" font-size="20" font-weight="500" fill="#3a96dd" stroke="none">R</text></svg>

      <svg viewBox="0 0 24 24"><text x="-.5" y="17" font-size="20" font-weight="500" fill="#3a96dd" stroke="none" letter-spacing="-.3">Py</text></svg>
      <svg viewBox="0 0 24 24"><path d="M1 0v22h22M1 10h10M1 15h6"/><circle cx="13" cy="10" r="1.500"/><circle cx="8.500" cy="15" r="1.500"/><path d="M1 4h16" stroke="#4fa3e0"/><circle cx="18.500" cy="4" r="2.500" fill="#0063b1" stroke="#6cb8f0"/></svg>
      <svg viewBox="0 0 24 24"><path d="M9 10h6M12 10V3h3M12 10v9h3"/><path d="M1 8h8v5H1zM15 1h8v5h-8zM15 8.500h8v5h-8zM15 16h8v5h-8z" fill="#0063b1" stroke="#6cb8f0"/></svg>
      <svg viewBox="0 0 24 24"><path d="M1 2h22v15H10l-5 4v-4H1z" stroke="#5d9fd0"/></svg>
      <svg viewBox="0 0 24 24"><path d="M3 5V1h12l5 6v15H3V12M15 1v6h5"/><circle cx="4" cy="9" r="2" fill="#0063b1" stroke="#6cb8f0"/><path d="M8 10h8M11 14h5" stroke="#6cb8f0"/></svg>
      <svg viewBox="0 0 24 24"><path d="M6 1h12v8c0 7-12 7-12 0zM6 3H1c0 5 2 8 6 8M18 3h5c0 5-2 8-6 8M10 14v5M14 14v5"/><path d="M6 1h12v3H6zM6 19h12v3H6z" fill="#0063b1" stroke="#6cb8f0"/></svg>

      <svg viewBox="0 0 24 24"><path d="M3 1h11l6 7v16H3zM14 1v7h6" stroke="#e8e8e8" stroke-width="1.400"/><path d="M5 15h3v6H5zM10 17h3v4h-3zM15 13h3v8h-3z" fill="#eee" stroke="none"/></svg>
      <svg viewBox="0 0 24 24"><path d="M10 4h13v17H1v-5M5 18h15"/><text x="7" y="16" font-size="10.500" fill="#4fa3e0" stroke="none" letter-spacing="-.2">123</text><path d="M3 0h7L8 5h3L1 15l2-8H0z" fill="#f9c060" stroke="#d06a08" stroke-width="1"/></svg>
      <svg viewBox="0 0 24 24"><path d="M14 1h8v8h-8zM3 14v8h7v-8zM3 11h10M13 12h11l-4 5v6h-3v-6z"/><path d="M3 0h7L8 5h3L1 15l2-8H0z" fill="#f9c060" stroke="#d06a08" stroke-width="1"/></svg>
      <svg viewBox="0 0 24 24"><path d="M12 1h11v8M2 15v7h11M13 12h11l-4 5v6h-3v-6z"/><path d="M8 17L13 5l4 8" stroke="#4fa3e0"/><path d="M3 0h7L8 5h3L1 15l2-8H0z" fill="#f9c060" stroke="#d06a08" stroke-width="1"/></svg>
      <svg viewBox="0 0 24 24"><path d="M12 1h11v8M2 15v7h11M13 12h11l-4 5v6h-3v-6zM5 14h2v2H5zM12 8h7M10 15h2"/><path d="M3 0h7L8 5h3L1 15l2-8H0z" fill="#f9c060" stroke="#d06a08" stroke-width="1"/></svg>
      <svg viewBox="0 0 24 24"><path d="M1 14v8h18M10 2h13v10" stroke="#6cb8f0" stroke-width="1.500"/><path d="M14 3h9l-1 7-6 2 1 5-5 4H2l9-4-2-6 5-2z" fill="#0063b1" stroke="none"/><path d="M4 13C1 9 0 6 0 4a4 4 0 0 1 8 0c0 2-1 5-4 9z" fill="#e07000" stroke="none"/><circle cx="4" cy="4" r="1.500" fill="#141414" stroke="none"/><circle cx="20" cy="20.500" r="3.200" fill="#e07000" stroke="none"/><circle cx="23" cy="14" r="1.800" fill="#e07000" stroke="none"/></svg>

      <svg viewBox="0 0 24 24"><path d="M8 2h7l8 10-7 9H9L1 12zM15 2L5 16M8 2l9 10-7 9M17 12l-7-8M17 12l5 6M12 8l7-1" stroke="#9a3aa8" stroke-width="1.300"/></svg>
      <svg viewBox="0 0 24 24"><path d="M1 2h14l8 9-8 10H1l8-10zM20 7L8 21M15 3L3 20M22 12l-8 9" stroke="#1b7fe0" stroke-width="1.300"/></svg>
      <svg viewBox="0 0 24 24"><path d="M5 9h3v2.500H5zM10 9h3v2.500h-3zM15 9h3v2.500h-3z" fill="#eee" stroke="none"/></svg>
    </div>
    <div class="mt-[9px] pl-[15px] leading-[22px]">Values</div>
    <div class="mt-[7px] ml-[5px] w-[213px] h-[35px] border border-dashed border-[#777] rounded-xs flex items-center pl-3 pb-px">Add data fields here</div>
    <div class="mt-[11px] pl-[15px] leading-[22px] font-semibold">Drill through</div>
    <div class="mt-[10px] pl-[15px] pr-[27px] flex items-center justify-between h-[22px]">Cross-report
      <div class="w-10 h-5 rounded-full border border-[#bbb] flex items-center pl-[5px] gap-[3px] text-[11px] text-[#bbb] leading-none"><i class="w-[10px] h-[10px] rounded-full bg-[#b5b5b5]"></i>Off</div></div>
    <div class="mt-[12px] pl-[15px] pr-[27px] flex items-center justify-between h-[22px]">Keep all filters
      <div class="w-10 h-5 rounded-full bg-[#2aab94] flex items-center pl-[6px] gap-[4px] text-[11px] text-[#1a3b35] leading-none">On<i class="w-[10px] h-[10px] rounded-full bg-[#292929]"></i></div></div>
    <div class="mt-[11px] ml-[5px] w-[213px] h-[32px] border border-dashed border-[#777] rounded-xs bg-black flex items-center pl-[10px]">Add drill-through fields here</div>
  </aside>

  <!-- data pane -->
  <aside class="flex-1 flex flex-col">
    <div class="h-[50px] flex items-center pl-[10px] pt-px"><h3 class="w-[192px] text-[19px] font-semibold">Data</h3><svg class="mb-[1px] w-[11px] h-3" viewBox="0 0 11 12" fill="none" stroke="#fff" stroke-width="1.700"><path d="M1 1l4.500 5L1 11M5 1l4.500 5L5 11"/></svg></div>
    <div class="mt-[7px] ml-[5px] w-[215px] h-[30px] rounded border border-[#777] bg-[#242424] flex items-center pl-[15px] text-[16.500px] text-[#999]">
      <svg class="w-[18px] h-[18px]" viewBox="0 0 18 18" fill="none" stroke="#aaa" stroke-width="1.300"><circle cx="7" cy="7" r="6"/><path d="M11.500 11.500L17 17"/></svg><span class="ml-[9px] pt-px">Search</span></div>
    <div class="mt-[15px] h-[24px] flex items-center pl-[20px]">
      <svg class="w-[7px] h-[11px]" viewBox="0 0 7 11" fill="none" stroke="#eee" stroke-width="1.600"><path d="M1 1l5 4.500L1 10"/></svg>
      <svg class="ml-[9px] w-4 h-4" viewBox="0 0 16 16" fill="none" stroke="#eee" stroke-width="1.300"><rect x=".8" y=".8" width="14.400" height="14.400" rx="3"/><path d="M5.500 1v14M10.500 1v14M1 5.500h14M1 10.500h14"/></svg>
      <span class="ml-[7px] tracking-[-0.03em]">nura_tracker</span></div>
  </aside>
</main>

<!-- status bar -->
<footer class="h-[30px] shrink-0 border-t border-[#666] border-b border-b-black flex items-center pl-[5px] pt-[3px] text-[#d8d8d8]">
  <span class="w-[1650px]">Page 1 of 3</span>
  <svg class="-mt-[2px] w-[156px] h-4" viewBox="0 0 156 16" fill="none" stroke="#d8d8d8" stroke-width="1.200"><path d="M1 7h5.500M144 7h9M148.500 2.500v9" stroke-width="1.800"/><path d="M12 7.500h125M74.500 3.500v8"/><path d="M55.500 1v13" stroke-width="4"/></svg>
  <span class="-mt-[2px] ml-[14px] w-[54px]">73%</span>
  <svg class="-mt-[1px] w-[18px] h-[14px]" viewBox="0 0 18 14" fill="none" stroke="#d8d8d8" stroke-width="1.400"><rect x="1" y="1" width="16" height="12" rx="1.500"/><path d="M4 5.500V4h2M12 4h2v1.500M4 8.500V10h2M14 8.500V10h-2"/></svg>
</footer>

<!-- taskbar -->
<section class="h-[58px] shrink-0 border-t border-[#444] bg-[#202020] flex items-start text-[14.5px] tracking-[0] text-[#f0f0f0]">
  <svg class="ml-6 mt-1.5 w-[35px] h-[30px] shrink-0" viewBox="0 0 35 30"><path d="M1 27l8-6h13l-2 2H11l-6 4zM8 27l3-2.500h9L17 27zM19 27l6-6h4l-6 6z" fill="#e10600"/><circle cx="24" cy="11" r="10" fill="#c42b1c"/><text x="24" y="16" text-anchor="middle" font-size="13" fill="#fff">8</text></svg>
  <div class="ml-[6px] mt-[8px] w-[391px] leading-[20px]"><div class="tracking-[-0.012em]">Sports headline</div><div class="text-[#b8b8b8]">Verstappen dom...</div></div>
  <svg class="mt-[15px] w-[29px] h-[29px] shrink-0" viewBox="0 0 29 29"><defs><linearGradient id="win" x1="0" y1="0" x2="1" y2="1"><stop offset="0" stop-color="#7fe3ff"/><stop offset="1" stop-color="#0a84e8"/></linearGradient></defs><path d="M0 0h14v14H0zM15 0h14v14H15zM0 15h14v14H0zM15 15h14v14H15z" fill="url(#win)"/></svg>
  <div class="ml-[18px] mt-[10px] w-[273px] h-[38px] rounded-full bg-[#f3f3f3] flex items-center pl-[13px] text-[16px] text-[#5a5a5a]">
    <svg class="w-5 h-5" viewBox="0 0 20 20" fill="none" stroke="#252525" stroke-width="2"><circle cx="8.500" cy="8.500" r="6.500"/><path d="M13 13l5.500 6"/></svg>
    <span class="ml-3 w-[162px]">Search</span>
    <svg class="w-[60px] h-[34px]" viewBox="0 0 60 34"><path d="M28 0h9l1 34H27z" fill="#c5c7d4"/><path d="M30 7h4M31 15h4M29 22h4" stroke="#777a8c" stroke-width="1.500"/><path d="M29 20L14 9M30 27L20 24M36 18L50 8M37 25l11-1M50 8l6-5" stroke="#8b8290" stroke-width="1.500" fill="none"/><g fill="#f5923a"><path d="M7 5c8 1 11 9 6 16-9 3-14-3-12-9 1-4 4-4 6-7z"/><path d="M18 3c6 2 7 8 2 12-7-1-7-8-2-12zM18 19c7 1 8 8 3 12-8 0-9-7-3-12zM46 18c6 2 6 9 1 12-7-2-6-9-1-12z"/></g><g fill="#ffb52e"><path d="M43 4c8 3 7 12 0 16-8-3-7-12 0-16zM54 11c6 3 5 10-1 13-7-3-5-10 1-13zM24 5c6 2 5 9 1 11-6-2-5-9-1-11z"/></g></svg>
  </div>
  <div class="ml-[13px] mt-[4px] h-[50px] flex items-center [&>div]:w-[55px] [&>div]:h-[50px] [&>div]:flex [&>div]:items-center [&>div]:pl-[3px] [&_svg]:w-[30px] [&_svg]:h-[30px] [&_svg]:shrink-0 [&_svg]:overflow-visible">
    <div><svg viewBox="0 0 30 30"><rect x="0" y="8" width="22" height="20" rx="1.500" fill="#777"/><rect x="8" y="1" width="22" height="20" rx="1.500" fill="#eaeaea"/><path d="M8 8h14v13H8z" fill="#b0b0b0"/></svg></div>
    <div><svg viewBox="0 2 40 40"><use href="#copilot"/></svg></div>
    <div><svg viewBox="0 0 30 30"><defs><linearGradient id="edge" x1="0" y1="0" x2="1" y2=".3"><stop offset="0" stop-color="#2bb4f0"/><stop offset="1" stop-color="#62e070"/></linearGradient></defs><path d="M1 14C2 5 8 0 15 0c9 0 15 6 15 12 0 5-4 8-8 8-3 0-5-1-4-3 2-4-2-7-6-7C6 10 2 13 1 18z" fill="url(#edge)"/><path d="M0 16c0-7 7-8 12-6-5 2-6 8-3 13 3 4 8 6 14 4-3 2-5 3-8 3C7 30 0 25 0 16z" fill="#1180d8"/><path d="M12 12c-3 7 3 13 14 12l2-1c-3 5-8 6-12 5-7-2-11-9-4-16z" fill="#0c56a4"/></svg></div>
    <div><svg viewBox="0 0 30 30"><path d="M0 5q0-3 3-3h8l4 4h12q3 0 3 3v4H0z" fill="#e8a010"/><path d="M0 9h30v17q0 2-2 2H2q-2 0-2-2z" fill="#ffcf4a"/><path d="M6 28v-6q0-2 2-2h14q2 0 2 2v6z" fill="#0f6fc4"/><path d="M10 24h10" stroke="#0a4c8c" stroke-width="1.500"/></svg></div>
    <div><svg viewBox="0 0 30 30"><rect x="0" y="4" width="30" height="23" rx="2" fill="#4fb8ee"/><rect x="2" y="6" width="26" height="19" fill="#bfe8fc"/><circle cx="10" cy="14" r="6" fill="#1878c8"/><path d="M10 14V8a6 6 0 0 1 6 6z" fill="#f0902a"/><path d="M19 10h7M19 17h7M5 23h20" stroke="#1878c8" stroke-width="2"/><circle cx="23" cy="10" r="2" fill="#1878c8"/><path d="M10 23h5" stroke="#f0902a" stroke-width="2"/></svg></div>
    <div><svg viewBox="0 0 30 30"><rect x="4" y="0" width="22" height="30" rx="2" fill="#6d7880"/><path d="M7 3h16v5H7z" fill="#4fd0f5"/><path d="M7 11h4v4H7zM13 11h4v4h-4zM19 11h4v4h-4zM7 17h4v4H7zM13 17h4v4h-4zM7 23h4v4H7zM13 23h4v4h-4z" fill="#d8dde2"/><path d="M19 17h4v10h-4z" fill="#1a62b8"/></svg></div>
    <div><svg viewBox="0 0 30 30"><rect x="4" y="8" width="26" height="21" rx="2" fill="#596068"/><rect x="0" y="1" width="22" height="16" rx="2" fill="#22b4d8"/><path d="M3 5h16M3 9h16" stroke="#fff" stroke-width="2" stroke-dasharray="2 1.600"/><path d="M3 13h15" stroke="#fff" stroke-width="2"/></svg></div>
    <div><svg viewBox="0 0 30 30"><circle cx="15" cy="15" r="14.500" fill="#1ed760"/><path d="M6 10.500c6-2 13-1.500 18.500 1.500M7 15.500c5-1.500 11-1 16 1.500M8 20c4-1 9-1 13 1.500" fill="none" stroke="#14231a" stroke-width="2.500" stroke-linecap="round"/></svg></div>
    <div><svg viewBox="0 0 30 30"><defs><linearGradient id="ff" x1=".8" y1="0" x2=".2" y2="1"><stop offset="0" stop-color="#ffe23a"/><stop offset=".45" stop-color="#ff8a1e"/><stop offset="1" stop-color="#f01868"/></linearGradient></defs><path d="M3 6c1 1 2 2 3 2 2-1 4-1 6 0 1-3 3-6 6-8 1 4 4 5 6 8 3 3 5 6 5 9 0 7-6 12-14 12S1 24 1 16c0-4 1-7 2-10z" fill="url(#ff)"/><circle cx="15" cy="17" r="6.500" fill="#7a3ae0"/><path d="M8 13c3 0 7-1 8 2-2 2-5 1-5 4 1 3 6 3 8 0-1 5-11 5-12-2z" fill="#ff9a2a"/></svg></div>
    <div class="relative"><svg viewBox="0 0 30 30"><circle cx="15" cy="15" r="14.500" fill="#fbbc04"/><path d="M2.500 7.500a14.500 14.500 0 0 1 25 0H15a7.500 7.500 0 0 0-6.500 11z" fill="#ea4335"/><path d="M2.500 7.500L8.500 19c2 3 6 4 9 3L14 29.500A14.500 14.500 0 0 1 2.500 7.500z" fill="#34a853"/><circle cx="15" cy="15" r="7.200" fill="#fff"/><circle cx="15" cy="15" r="5.600" fill="#4285f4"/></svg><i class="absolute left-[14px] bottom-0 w-2 h-1 rounded-full bg-[#999]"></i></div>
    <div class="relative"><svg viewBox="0 0 30 30" fill="none" stroke="#25d366"><path d="M2 28l2-7C-1 12 5 2 15 2s17 11 11 20c-4 6-12 7-17 4z" stroke-width="2.600"/><path d="M10 8c-3 3 5 14 12 13 2-1 2-3 1-4l-3-1-2 2c-2-1-4-3-5-5l1-2-1-3z" fill="#25d366" stroke="none"/></svg><span class="absolute left-[10px] top-[3px] h-[21px] w-[35px] rounded-full bg-[#4cc2ff] text-[#111] leading-[20px] text-center text-[14px]">99+</span></div>
  </div>
  <div class="-ml-[7px] mt-[4px] relative w-[48px] h-[50px] rounded-[4px] border border-[#383838] bg-[#2c2c2c] flex items-center justify-center"><svg class="w-6 h-[30px]" viewBox="0 0 24 30"><rect x="13" y="0" width="11" height="30" rx="1" fill="#d9930c"/><rect x="6" y="7" width="11" height="23" rx="1" fill="#f0c02a"/><rect x="0" y="15" width="10" height="15" rx="1" fill="#f9e07c"/></svg><i class="absolute bottom-0 left-[14px] w-5 h-1 rounded-full bg-[#4cc2ff]"></i></div>
  <svg class="ml-auto mt-[25px] w-[14px] h-2 shrink-0" viewBox="0 0 14 8" fill="none" stroke="#f0f0f0" stroke-width="1.700"><path d="M1 7l6-6 6 6"/></svg>
  <svg class="ml-[23px] mt-[22px] w-[21px] h-[14px] shrink-0" viewBox="0 0 21 14"><path d="M6 13C0 13-1 7 3 5c1-5 9-6 11-1 5 0 8 4 6 7-1 2-2 2-4 2z" fill="#eee"/><path d="M3 5c1-5 9-6 11-1-4 0-5 2-6 3-2-2-4-2-5-2z" fill="#999"/></svg>
  <svg class="ml-[22px] mt-[19px] w-[14px] h-[21px] shrink-0" viewBox="0 0 14 21" fill="none" stroke="#6ec6e0" stroke-width="1.500"><rect x="4" y="1" width="6" height="12" rx="3"/><path d="M1 9c0 9 12 9 12 0M7 16v4.500"/></svg>
  <div class="ml-[19px] mt-[9px] w-[42px] text-center leading-5 tracking-[-0.02em]"><div>ENG</div><div>US</div></div>
  <svg class="ml-[16px] mt-[20px] w-5 h-[17px] shrink-0" viewBox="0 0 20 17" fill="none" stroke-width="1.600"><path d="M1 6c5-6 13-6 18 0" stroke="#666"/><path d="M4 9.500c4-4 8-4 12 0M6.500 12.500c2-2 5-2 7 0" stroke="#eee"/><circle cx="10" cy="15" r="1.500" fill="#eee"/></svg>
  <svg class="ml-[9px] mt-[20px] w-5 h-[17px] shrink-0" viewBox="0 0 20 17" fill="none" stroke="#eee" stroke-width="1.400"><path d="M1 6h3l5-4.500v14L4 11H1zM12 6c1.500 1.500 1.500 3.500 0 5M14.500 3.500c3 3 3 7 0 10"/><path d="M17 1.500c3 4 3 10 0 14" stroke="#777"/></svg>
  <svg class="ml-[10px] mt-[20px] w-[21px] h-[17px] shrink-0 overflow-visible" viewBox="0 0 21 17"><rect x="3.500" y="4" width="14" height="11" rx="2" fill="none" stroke="#eee" stroke-width="1.500"/><path d="M7 7h8v5H7z" fill="#eee"/><path d="M18.500 7.500v4" stroke="#eee" stroke-width="2"/><path d="M5-1.500L0 7h3l-1 6 6-8H5z" fill="#eee" stroke="#202020"/></svg>
  <div class="ml-[9px] mt-[8px] w-[80px] text-right leading-5 tracking-[-0.026em]"><div>4:55 AM</div><div>9/22/2025</div></div>
  <svg class="ml-[11px] mr-[24px] mt-[19px] w-[18px] h-[19px] shrink-0" viewBox="0 0 18 19"><path d="M2 14c1-2 1-4 1-6 0-8 11-8 11 0 0 2 0 4 2 6v1.500H1zM6 17h6c-1 2-5 2-6 0z" fill="#eee"/><path d="M7 6h4l-4 5h4M13 1h4l-4 4h4" stroke="#202020" stroke-width="1.200" fill="none"/><path d="M13.500 0h4l-4 4h4" stroke="#eee" stroke-width="1.200" fill="none"/></svg>
</section>

<script>
const NS = 'http://www.w3.org/2000/svg';
function add(parent, tag, attrs, text) {
  const e = document.createElementNS(NS, tag);
  for (const k in attrs) e.setAttribute(k, attrs[k]);
  if (text) e.textContent = text;
  parent.appendChild(e);
}
// monthly trend: month, label, line y, label y
const months = [['January','24K',512.5,525],['August','23K',518,530],['March','22K',523,511],['June','21K',523.5,511],['July','20K',530,518],['Februa...','20K',532.5,520],['May','19K',535,522],['April','18K',543.5,531],['Septe...','17K',549,537],['October','12K',574.5,562],['Nove...','12K',576,563],['Decem...','11K',580,567]];
const trend = document.getElementById('trend');
add(trend, 'polyline', {points: months.map((m, i) => (457 + i * 37.05) + ',' + m[2]).join(' '), fill: 'none', stroke: '#ff3d14', 'stroke-width': 3, 'stroke-linejoin': 'round'});
months.forEach((m, i) => {
  const x = 457 + i * 37.05;
  add(trend, 'text', {x: x, y: m[3] + 4, 'text-anchor': 'middle', 'font-size': 10.5, fill: '#605e5c'}, m[1]);
  add(trend, 'text', {transform: `translate(${x - 4} 596) rotate(-35)`, 'text-anchor': 'end', 'font-size': 10.7, fill: '#605e5c'}, m[0]);
});
// restaurants: name, value label, bar top
const rest = [['Nobu Doha','11.3K',714.2],['Ziafat','10.1K',723],['Isaan','9.7K',726],['Spice Mar...','9.6K',726.3],['Bandar A...','9.6K',726.7],['Ottoman ...','9.5K',727],['Pak Pakwan','9.1K',730],['Palestine ...','9.1K',730],['Shay Al S...','9.0K',731.2],['Biryani Hut','8.9K',731.5],['Morimot...','8.8K',732.4],['MRA Bak...','8.7K',733],['Rotana R...','8.6K',733.2],['Turkey Ce...','8.6K',733.5],['Em Sherif...','8.4K',735.2],['Sulaimani...','8.2K',736.3],['Tandoor ...','8.2K',736.3],['Zaoq','8.2K',736.6],['Bayt El Tal...','8.1K',737],['Hakkasan','8.1K',737.4],['Zaitoon R...','7.8K',739.2],['Afghan Br...','7.7K',740],['La Mar by...','7.4K',742],['Idam','7.2K',744],['Chotto M...','7.0K',745.2]];
const bars = document.getElementById('bars');
rest.forEach((r, i) => {
  const x = 121.5 + i * 43.24;
  add(bars, 'rect', {x: x, y: r[2], width: 34.6, height: 796.3 - r[2], fill: '#d9b300'});
  add(bars, 'text', {x: x + 17.3, y: r[2] - 8.3, 'text-anchor': 'middle', 'font-size': 10.5, 'letter-spacing': -0.2, fill: '#151515'}, r[1]);
  add(bars, 'text', {transform: `translate(${x + 12.8} 808) rotate(-36)`, 'text-anchor': 'end', 'font-size': 10.8, 'letter-spacing': -0.1, fill: '#3a35b0'}, r[0]);
});
</script>
</body>
</html>
